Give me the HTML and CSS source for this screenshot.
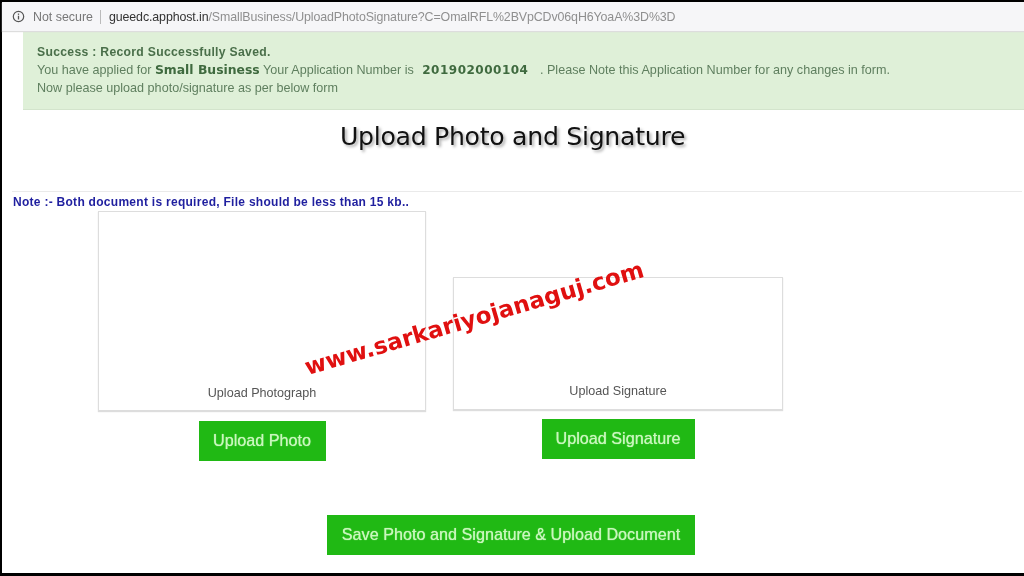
FILE: index.html
```html
<!DOCTYPE html>
<html lang="en">
<head>
<meta charset="utf-8">
<title>Upload Photo and Signature</title>
<link rel="stylesheet" href="styles.css">
</head>
<body>
<div class="frame">
  <header class="addressbar">
    <svg class="info" viewBox="0 0 14 14" width="13" height="13" aria-hidden="true">
      <circle cx="7" cy="7" r="5.6" fill="none" stroke="#555" stroke-width="1.3"/>
      <rect x="6.3" y="6.2" width="1.4" height="4" fill="#555"/>
      <rect x="6.3" y="3.8" width="1.4" height="1.4" fill="#555"/>
    </svg>
    <span class="secure">Not secure</span>
    <span class="sep"></span>
    <span class="url"><span class="host">gueedc.apphost.in</span>/SmallBusiness/UploadPhotoSignature?C=OmalRFL%2BVpCDv06qH6YoaA%3D%3D</span>
  </header>
  <main class="page">
    <section class="alert">
      <div class="alert-title">Success : Record Successfully Saved.</div>
      <div class="alert-line">You have applied for <b class="scheme">Small Business</b> Your Application Number is <b class="appno">201902000104</b> . Please Note this Application Number for any changes in form.</div>
      <div class="alert-line">Now please upload photo/signature as per below form</div>
    </section>
    <h1 class="title">Upload Photo and Signature</h1>
    <hr class="rule">
    <p class="note">Note :- Both document is required, File should be less than 15 kb..</p>
    <div class="uploads">
      <div class="upload upload-photo">
        <div class="box box-photo"><span>Upload Photograph</span></div>
        <button class="btn btn-photo">Upload Photo</button>
      </div>
      <div class="upload upload-sign">
        <div class="box box-sign"><span>Upload Signature</span></div>
        <button class="btn btn-sign">Upload Signature</button>
      </div>
    </div>
    <div class="save-row">
      <button class="btn btn-save">Save Photo and Signature &amp; Upload Document</button>
    </div>
    <div class="watermark">www.sarkariyojanaguj.com</div>
  </main>
</div>
</body>
</html>
```

FILE: styles.css
```css
* { box-sizing: border-box; }
html, body { margin: 0; padding: 0; width: 1024px; height: 576px; overflow: hidden; background: #000; }
.frame {
  width: 1022px; height: 571px; margin: 2px 0 0 2px;
  background: #fff; display: flex; flex-direction: column;
  font-family: "Liberation Sans", Arial, sans-serif;
  filter: blur(0.35px);
}
.addressbar {
  height: 29px; flex: none; background: #f6f6f8; display: flex; align-items: center;
  padding-left: 10px; font-size: 12.4px; color: #8a8a8a;
  box-shadow: 0 1px 1px #ddd; position: relative; z-index: 1;
}
.info { margin-right: 8px; }
.secure { color: #777; }
.sep { width: 1px; height: 14px; background: #bbb; margin: 0 8px 0 7px; }
.url { color: #8f8f8f; letter-spacing: -0.1px; }
.host { color: #333; }
.page { position: relative; flex: 1; }
.alert {
  margin-left: 21px; height: 79px; background: #dff0d8; color: #5f7f5f;
  padding: 12px 14px 0; font-size: 12.6px; line-height: 18px; border-bottom: 1px solid #d3e4cc;
}
.alert-title { font-weight: bold; font-size: 12.2px; color: #4a6f4a; letter-spacing: 0.3px; }
.scheme { font-family: "DejaVu Sans", sans-serif; font-size: 12.4px; color: #3f6a3f; }
.appno { font-family: "DejaVu Sans", sans-serif; font-size: 12px; color: #3f6a3f; margin: 0 8px 0 5px; letter-spacing: 0.5px; }
.title {
  margin: 9px 0 0 -1px; height: 36px; line-height: 36px; text-align: center; font-weight: normal;
  font-family: "DejaVu Sans", sans-serif; font-size: 25.2px; color: #111; letter-spacing: -0.3px;
  text-shadow: 2px 2px 3px #aaa;
}
.rule { margin: 36px 2px 0 10px; border: 0; border-top: 1px solid #eaeaea; }
.note { margin: 3px 0 0 11px; height: 15px; line-height: 15px; font-size: 12px; font-weight: bold; color: #1f1f9f; letter-spacing: 0.28px; }
.uploads { display: flex; align-items: flex-start; padding-left: 96px; }
.upload { display: flex; flex-direction: column; align-items: center; }
.upload-photo { width: 328px; margin-top: 1px; }
.upload-sign { width: 330px; margin-left: 27px; margin-top: 67px; }
.box {
  width: 100%; border: 1px solid #ddd; box-shadow: 0 1px 1px #ddd; display: flex;
  justify-content: center; align-items: flex-end; font-size: 12.6px; color: #555;
}
.box-photo { height: 200px; padding-bottom: 10px; }
.box-sign { height: 133px; padding-bottom: 11px; }
.btn {
  display: block; border: 0; border-radius: 0; background: #20b914; color: #c9f7bd;
  font-family: "Liberation Sans", Arial, sans-serif; font-size: 16.2px; height: 40px; padding: 0 0 2px;
  text-shadow: 0 0 1px #c9f7bd;
}
.btn-photo { width: 127px; margin-top: 10px; }
.btn-sign { width: 153px; margin-top: 9px; }
.save-row { padding-left: 325px; margin-top: 54px; }
.btn-save { width: 368px; }
.watermark {
  position: absolute; left: 307px; top: 323px; transform: rotate(-16.3deg); transform-origin: left bottom;
  font-family: "DejaVu Sans", sans-serif; font-weight: bold; font-size: 23.1px; color: #e01010; white-space: nowrap;
}
```
